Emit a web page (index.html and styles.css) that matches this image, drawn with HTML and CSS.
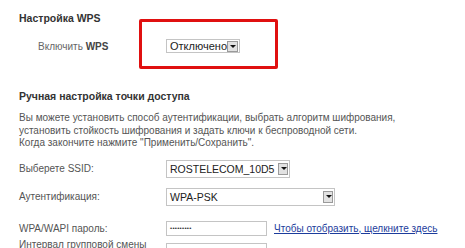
FILE: index.html
```html
<!DOCTYPE html>
<html lang="ru">
<head>
<meta charset="utf-8">
<link rel="stylesheet" href="styles.css">
</head>
<body>
<div class="page">
  <section class="wps">
    <h2 class="head">Настройка WPS</h2>
    <div class="wps-row">
      <span class="wps-label">Включить <b>WPS</b></span>
      <span class="sel sel-wps"><span class="sel-text">Отключено</span><span class="arrow"></span></span>
      <span class="mark"></span>
    </div>
  </section>

  <section class="manual">
    <h2 class="head">Ручная настройка точки доступа</h2>
    <p class="desc">Вы можете установить способ аутентификации, выбрать алгоритм шифрования,<br>установить стойкость шифрования и задать ключи к беспроводной сети.<br>Когда закончите нажмите "Применить/Сохранить".</p>

    <div class="form">
      <div class="row row-ssid">
        <span class="lbl">Выберете SSID:</span>
        <span class="sel sel-ssid"><span class="sel-text">ROSTELECOM_10D5</span><span class="arrow"></span></span>
      </div>
      <div class="row row-auth">
        <span class="lbl">Аутентификация:</span>
        <span class="sel sel-auth"><span class="sel-text">WPA-PSK</span><span class="arrow"></span></span>
      </div>
      <div class="row row-pass">
        <span class="lbl">WPA/WAPI пароль:</span>
        <span class="inp"><span class="dots">•••••••••</span></span>
        <a class="link" href="#">Чтобы отобразить, щелкните здесь</a>
      </div>
      <div class="row row-int">
        <span class="lbl lbl-int">Интервал групповой смены</span>
        <span class="inp"></span>
      </div>
    </div>
  </section>
</div>
</body>
</html>
```

FILE: styles.css
```css
* { box-sizing: border-box; }
html, body { margin: 0; padding: 0; background: #fff; }
body {
  width: 465px;
  height: 248px;
  overflow: hidden;
  font-family: "Liberation Sans", Arial, sans-serif;
  font-size: 10px;
  color: #555;
}
.page { padding: 12px 0 0 19px; }
.head {
  margin: 0;
  font-size: 10.5px;
  font-weight: bold;
  color: #333;
  line-height: 12px;
}
.wps-row {
  position: relative;
  display: flex;
  align-items: center;
  height: 30px;
  margin-top: 7px;
}
.wps-label {
  width: 147px;
  padding-left: 19px;
  color: #666;
}
.wps-label b { color: #444; }
.sel {
  display: flex;
  align-items: center;
  background: #fff;
  border: 1px solid #c4c4c4;
  color: #222;
}
.sel-text { flex: 1; min-width: 0; overflow: hidden; padding-left: 3px; white-space: nowrap; }
.arrow {
  flex: none;
  position: relative;
  width: 11px;
  height: 11px;
  margin-right: 1px;
  background: #e2e2e2;
  border: 1px solid #9a9a9a;
}
.arrow::after {
  content: "";
  position: absolute;
  left: 1.5px;
  top: 3px;
  border-left: 3px solid transparent;
  border-right: 3px solid transparent;
  border-top: 3px solid #111;
}
.sel-wps { width: 74px; height: 14px; font-size: 11px; }
.mark {
  position: absolute;
  left: 120px;
  top: -12px;
  width: 139px;
  height: 50px;
  border: 3px solid #e01010;
  border-radius: 2px;
}
.manual { margin-top: 29px; }
.desc {
  margin: 10px 0 0;
  line-height: 12.5px;
  color: #555;
}
.form { margin-top: 10px; }
.row { display: flex; align-items: center; }
.lbl { width: 147px; color: #555; }
.row-ssid { height: 18px; }
.row-auth { height: 18px; margin-top: 10px; }
.row-pass { height: 15px; margin-top: 15px; }
.row-int { height: 15px; margin-top: 7px; align-items: flex-start; }
.lbl-int { margin-top: -4px; line-height: 12px; }
.sel-ssid { width: 124px; height: 18px; font-size: 10.5px; }
.sel-auth { width: 169px; height: 18px; font-size: 10.5px; }
.sel-ssid .arrow, .sel-auth .arrow { width: 10px; height: 12px; margin-right: 1px; }
.inp {
  display: flex;
  align-items: center;
  width: 101px;
  height: 15px;
  border: 1px solid #c4c4c4;
  padding-left: 3px;
}
.dots { font-size: 6px; font-weight: bold; color: #333; letter-spacing: 0.3px; }
.link {
  margin-left: 7px;
  color: #1c3c9c;
  text-decoration: underline;
}
```
